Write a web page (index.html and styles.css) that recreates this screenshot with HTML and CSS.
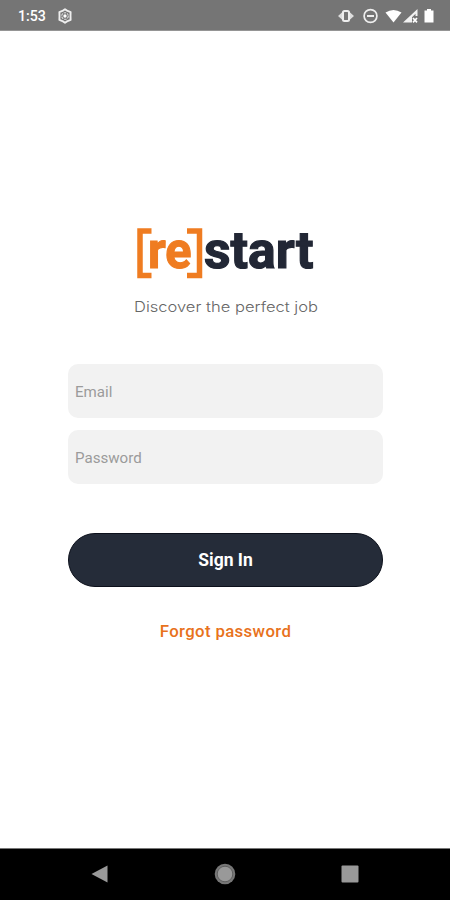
FILE: index.html
```
<!DOCTYPE html>
<html lang="en">
<head>
<meta charset="utf-8">
<title>[re]start</title>
<link rel="stylesheet" href="styles.css">
</head>

<body>
<header class="status-bar">
  <span class="clock">1:53</span>
  <svg class="gear" width="16" height="16" viewBox="0 0 16 16">
    <path d="M8 1.2 L10 2.6 L13.6 4.1 L13.5 8 L13.6 11.9 L10 13.4 L8 14.8 L6 13.4 L2.4 11.9 L2.5 8 L2.4 4.1 L6 2.6 Z" fill="none" stroke="#eee" stroke-width="1.9" stroke-linejoin="round"/>
    <circle cx="8" cy="8" r="3.3" fill="none" stroke="#ddd" stroke-width="1.1" stroke-dasharray="2.5 .95"/>
    <circle cx="8" cy="8" r="1.7" fill="#fff"/>
  </svg>
  <svg class="status-icons" width="98" height="18" viewBox="0 0 98 18">
    <!-- vibrate -->
    <path d="M5 4.5 L0 9 L5 13.5 M11 4.5 L16 9 L11 13.5" fill="#ddd"/>
    <rect x="5" y="4" width="6" height="10" rx="1.5" fill="#777" stroke="#eee" stroke-width="2"/>
    <!-- do not disturb -->
    <circle cx="32.5" cy="9" r="6.4" fill="none" stroke="#eee" stroke-width="1.7"/>
    <path d="M29 9h7" stroke="#eee" stroke-width="2"/>
    <!-- wifi -->
    <path d="M47.5 5.5 Q55.5 .5 63.5 5.5 L55.5 15.5 Z" fill="#fff"/>
    <!-- signal -->
    <path d="M65 15.5 L79.5 2 V9 H77.5 V6.8 L74 10.2 V15.5 Z" fill="#f2f2f2"/>
    <path d="M75 11 l4 4.3 M79 11 l-4 4.3" stroke="#fff" stroke-width="1.7"/>
    <!-- battery -->
    <path d="M86.5 3.5 h2.5 v-1.5 h4 v1.5 h2.5 v12 h-9 Z" fill="#fff"/>
  </svg>
</header>

<main class="login">
  <svg class="logo" width="180" height="54" viewBox="0 0 180 54" role="img" aria-label="[re]start">
    <path class="bracket" d="M16.5 5 H5 V49.5 H16.5 M52 5 H64.5 V49.5 H52"/>
    <text class="logo-re" x="13" y="41.5" textLength="43.5" lengthAdjust="spacingAndGlyphs">re</text>
    <text class="logo-start" x="69" y="41.5" textLength="109.5" lengthAdjust="spacingAndGlyphs">start</text>
  </svg>
  <svg class="tagline" width="186" height="22" viewBox="0 0 186 22">
    <text x="2" y="15.5" textLength="184" lengthAdjust="spacingAndGlyphs">Discover the perfect job</text>
  </svg>

  <form class="form">
    <input class="field" type="text" placeholder="Email">
    <input class="field" type="password" placeholder="Password">
    <button class="sign-in" type="button">Sign In</button>
  </form>
  <a class="forgot">Forgot password</a>
</main>

<nav class="nav-bar">
  <svg width="20" height="22" viewBox="0 0 20 22"><path d="M1.5 11 L17.5 2.5 V19.5 Z" fill="#999"/></svg>
  <svg width="22" height="22" viewBox="0 0 22 22">
    <circle cx="11" cy="11" r="10.3" fill="#777"/>
    <circle cx="11" cy="11" r="7.8" fill="#999" stroke="#5f5f5f"/>
  </svg>
  <svg width="20" height="22" viewBox="0 0 20 22"><rect x="1.5" y="2.5" width="17" height="17" rx="1" fill="#999"/></svg>
</nav>
</body>

</html>
```

FILE: styles.css
```
body {
  margin: 0;
  height: 900px;
  display: flex;
  flex-direction: column;
  background-color: white;
  font-family: Roboto, sans-serif;
  overflow: hidden;
}

svg {
  display: block;
}

.status-bar {
  box-sizing: border-box;
  height: 31px;
  display: flex;
  align-items: center;
  padding: 2px 14.5px 0 18px;
  background-color: #757575;
  border-bottom: 1px solid #959595;
  color: white;
}

.clock {
  width: 39px;
  font-size: 14.2px;
  font-weight: 500;
}

.status-icons {
  margin-left: auto;
}

.login {
  flex: 1;
  display: flex;
  flex-direction: column;
  align-items: center;
  padding-top: 195px;
}

.logo {
  overflow: visible;
}

.bracket {
  fill: none;
  stroke: #ef7c21;
  stroke-width: 5.5;
}

.logo-re,
.logo-start {
  font-size: 52px;
  font-weight: 700;
  stroke-width: 1.2;
}

.logo-re {
  fill: #ef7c21;
  stroke: #ef7c21;
}

.logo-start {
  fill: #222735;
  stroke: #222735;
}

.tagline {
  margin-top: 16px;
  overflow: visible;
}

.tagline text {
  font-family: Inter, sans-serif;
  font-size: 14.5px;
  font-weight: 300;
  fill: #666;
}

.form {
  width: 315px;
  display: flex;
  flex-direction: column;
  gap: 12px;
  margin: 46px 0 0 1px;
}

.field {
  box-sizing: border-box;
  height: 54px;
  padding: 2px 7px 0;
  border: none;
  border-radius: 10px;
  background-color: #f2f2f2;
  font-family: Roboto, sans-serif;
  font-size: 15.1px;
}

.field::placeholder {
  color: #9b9b9b;
}

.sign-in {
  height: 54px;
  margin-top: 37px;
  padding: 0;
  border: 1px solid #0c101b;
  border-radius: 27px;
  background-color: #252c39;
  color: white;
  font-family: Roboto, sans-serif;
  font-size: 17.5px;
  font-weight: 700;
}

.forgot {
  margin: 34px 0 0 1px;
  color: #e8721c;
  font-size: 16.8px;
  font-weight: 500;
  line-height: 20px;
  letter-spacing: .35px;
}

.nav-bar {
  box-sizing: border-box;
  height: 52px;
  display: flex;
  align-items: center;
  justify-content: space-between;
  padding: 0 90px 2px;
  background-color: black;
  border-top: 1px solid #777;
}
```
